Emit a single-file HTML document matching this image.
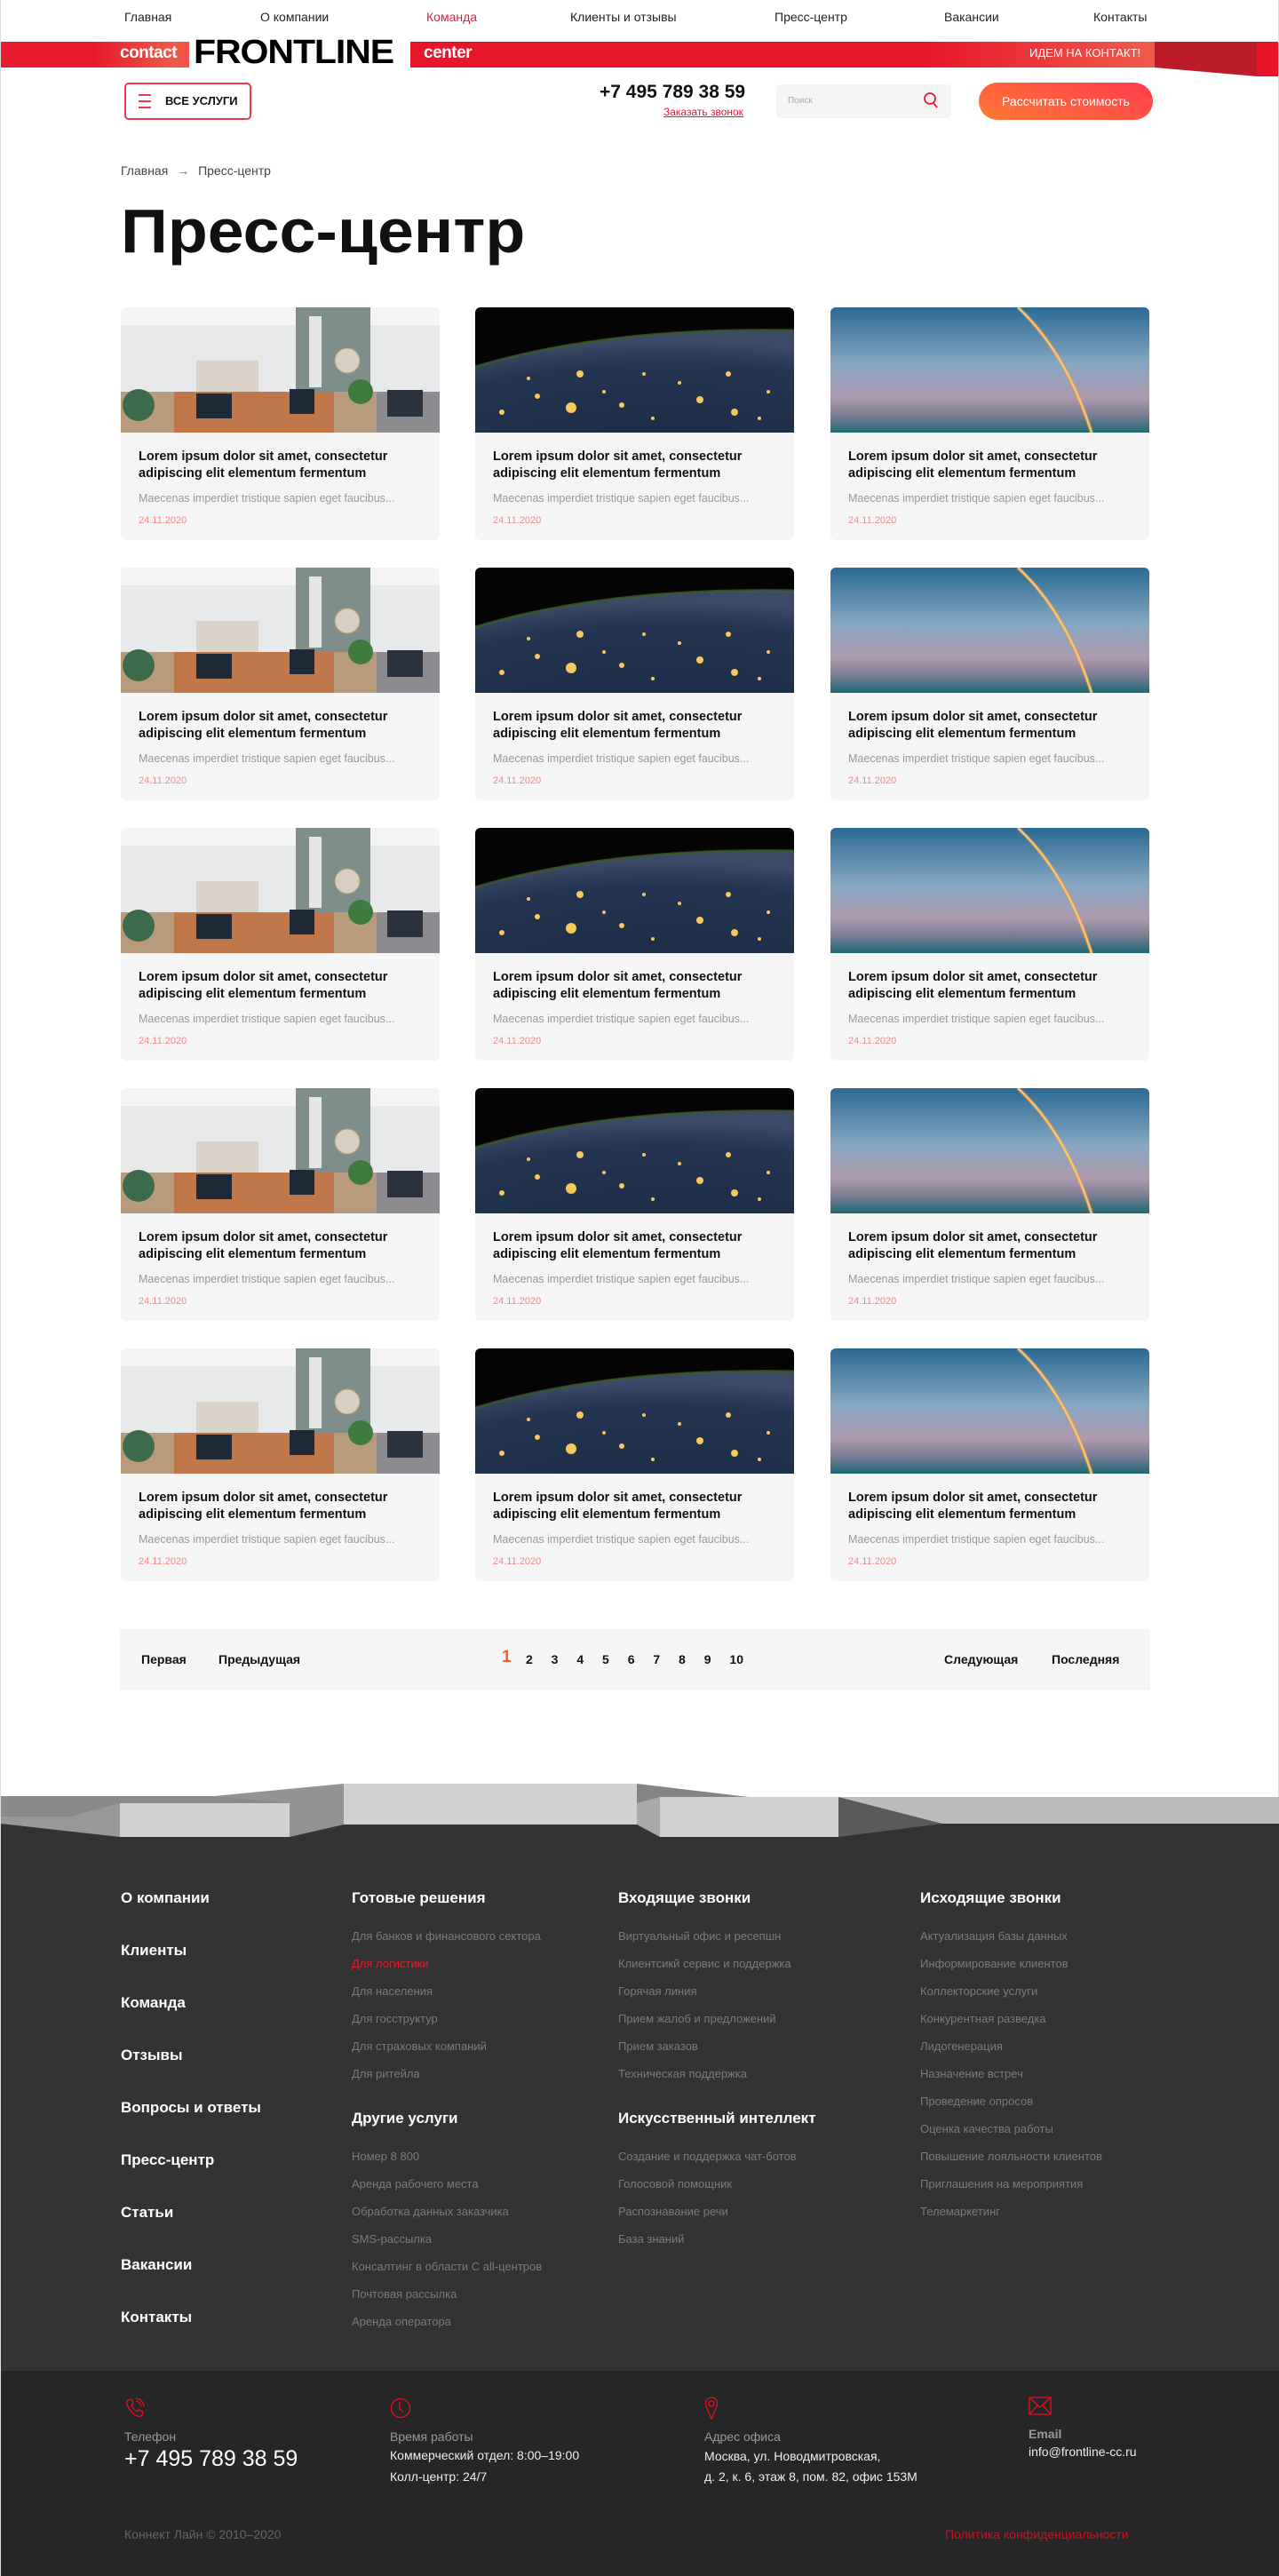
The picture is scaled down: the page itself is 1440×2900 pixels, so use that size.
<!DOCTYPE html>
<html><head><meta charset="utf-8">
<style>
*{margin:0;padding:0;box-sizing:border-box}
body{width:1440px;height:2900px;position:relative;background:#fff;font-family:"Liberation Sans","Noto Sans CJK SC",sans-serif;color:#111;overflow:hidden;border-left:1px solid #ddd;border-right:1px solid #ddd}
.a{position:absolute;white-space:nowrap}
.nav{top:11px;font-size:14px;color:#222}
.card{position:absolute;width:359px;height:262px;background:#f5f5f5;border-radius:6px;overflow:hidden}
.card svg{display:block}
.card h3{position:absolute;left:20px;top:159px;font-size:14.5px;line-height:19px;font-weight:bold;color:#111;width:330px}
.card p{position:absolute;left:20px;top:208px;font-size:12.5px;color:#999;white-space:nowrap}
.card span{position:absolute;left:20px;top:234px;font-size:11px;color:#f08a8f}
.pg{top:1860px;font-size:14px;font-weight:bold}
.fl{left:135px;font-size:17px;font-weight:bold;color:#fff}
.fh{font-size:17px;color:#fff;font-weight:bold}
.fi{font-size:13px;color:#7a7a7a}
</style></head><body>
<svg width="0" height="0" style="position:absolute"><defs>
<linearGradient id="sky" x1="0" y1="0" x2="0" y2="1"><stop offset="0" stop-color="#2a6a93"/><stop offset=".45" stop-color="#86a6c2"/><stop offset=".72" stop-color="#ae9aae"/><stop offset=".86" stop-color="#7b7d94"/><stop offset="1" stop-color="#1d6a74"/></linearGradient>
<radialGradient id="earth" cx=".6" cy="1.3" r="1.2"><stop offset="0" stop-color="#1b2a44"/><stop offset=".8" stop-color="#233550"/><stop offset="1" stop-color="#3b4a66"/></radialGradient>
<g id="imgA"><rect width="359" height="141" fill="#e8e9ea"/><rect x="0" y="0" width="359" height="20" fill="#f4f4f4"/><rect x="197" y="0" width="84" height="141" fill="#7e8f8b"/><rect x="212" y="10" width="14" height="80" fill="#e6e6e6"/><circle cx="255" cy="60" r="14" fill="#d8cfc0" stroke="#b8a070"/><rect x="85" y="60" width="70" height="40" fill="#d9d3c9"/><rect x="0" y="95" width="359" height="46" fill="#b89a7c"/><rect x="60" y="95" width="180" height="46" fill="#c0784a"/><rect x="85" y="97" width="40" height="28" fill="#1e2a38"/><rect x="190" y="92" width="28" height="28" fill="#1e2a38"/><rect x="288" y="95" width="71" height="46" fill="#8b8b90"/><rect x="300" y="93" width="40" height="30" fill="#2a3240"/><circle cx="20" cy="110" r="18" fill="#3d6a4a"/><circle cx="270" cy="95" r="14" fill="#3f7a3e"/></g>
<g id="imgB"><rect width="359" height="141" fill="#050505"/><path d="M0 67 Q150 22 359 26 L359 141 L0 141Z" fill="url(#earth)"/><path d="M0 67 Q150 22 359 26" stroke="#3e5a2e" stroke-width="3" fill="none" opacity=".8"/><g fill="#f7c760"><circle cx="118" cy="75" r="4"/><circle cx="108" cy="113" r="6"/><circle cx="165" cy="110" r="3"/><circle cx="253" cy="104" r="4"/><circle cx="292" cy="118" r="4"/><circle cx="70" cy="100" r="3"/><circle cx="30" cy="118" r="3"/><circle cx="190" cy="75" r="2"/><circle cx="285" cy="75" r="3"/><circle cx="330" cy="95" r="2"/><circle cx="230" cy="85" r="2"/><circle cx="145" cy="95" r="2"/><circle cx="320" cy="125" r="2"/><circle cx="200" cy="125" r="2"/><circle cx="60" cy="80" r="2"/></g></g>
<g id="imgC"><rect width="359" height="141" fill="url(#sky)"/><path d="M211 0 Q265 50 294 141" stroke="#ffd98a" stroke-width="2.5" fill="none"/><path d="M211 0 Q265 50 294 141" stroke="#f59c3c" stroke-width="5" fill="none" opacity=".35"/></g>
</defs></svg>

<!-- top nav -->
<div class="a nav" style="left:139px">Главная</div>
<div class="a nav" style="left:292px">О компании</div>
<div class="a nav" style="left:479px;color:#e8192c">Команда</div>
<div class="a nav" style="left:641px">Клиенты и отзывы</div>
<div class="a nav" style="left:871px">Пресс-центр</div>
<div class="a nav" style="left:1062px">Вакансии</div>
<div class="a nav" style="left:1230px">Контакты</div>

<!-- red band -->
<div class="a" style="left:0;top:47px;width:1299px;height:29px;background:linear-gradient(90deg,#e8192c 0%,#e8192c 8%,#ef5a4a 15%,#e8162a 25%,#e8162a 80%,#ee5c4c 100%)"></div>
<svg class="a" style="left:1299px;top:47px" width="141" height="40"><polygon points="0,0 115,0 115,39 0,29" fill="#bd1b29"/><rect x="115" y="0" width="24" height="39" fill="#e8152a"/></svg>
<div class="a" style="left:134px;top:49px;font-size:19px;font-weight:bold;color:#fff;letter-spacing:-.5px">contact</div>
<div class="a" style="left:212px;top:43px;width:249px;height:33px;background:#fff"></div>
<div class="a" style="left:217px;top:38px;font-size:38px;font-weight:bold;color:#000;letter-spacing:-1px;transform:scaleX(1.08);transform-origin:left">FRONTLINE</div>
<div class="a" style="left:476px;top:49px;font-size:19px;font-weight:bold;color:#fff;letter-spacing:-.5px">center</div>
<div class="a" style="left:1158px;top:52px;font-size:13px;color:#fff">ИДЕМ НА КОНТАКТ!</div>

<!-- row 2 -->
<div class="a" style="left:139px;top:93px;width:143px;height:42px;border:2px solid #f0394a;border-radius:5px"></div>
<div class="a" style="left:155px;top:106px;width:14px;height:2px;background:#f0394a;box-shadow:0 7px 0 #f0394a,0 14px 0 #f0394a"></div>
<div class="a" style="left:185px;top:106px;font-size:13px;font-weight:bold">ВСЕ УСЛУГИ</div>
<div class="a" style="left:674px;top:92px;font-size:21px;font-weight:bold">+7 495 789 38 59</div>
<div class="a" style="left:746px;top:119px;font-size:12px;color:#e8192c;text-decoration:underline">Заказать звонок</div>
<div class="a" style="left:873px;top:95px;width:197px;height:38px;background:#f4f4f4;border-radius:5px"></div>
<div class="a" style="left:886px;top:108px;font-size:10px;color:#aaa">Поиск</div>
<svg class="a" style="left:1039px;top:103px" width="16" height="20"><circle cx="7" cy="8" r="6" stroke="#e8192c" stroke-width="1.8" fill="none"/><line x1="11" y1="13" x2="15" y2="18" stroke="#e8192c" stroke-width="1.8"/></svg>
<div class="a" style="left:1101px;top:93px;width:196px;height:42px;border-radius:21px;background:linear-gradient(20deg,#ff7a35,#ff3a4c);color:#fff;font-size:14px;line-height:42px;text-align:center">Рассчитать стоимость</div>

<div class="a" style="left:135px;top:184px;font-size:14px;color:#444">Главная <span style="margin:0 6px;color:#666">→</span> Пресс-центр</div>
<div class="a" style="left:135px;top:220px;font-size:70px;font-weight:bold;letter-spacing:0px;transform:scaleX(1.05);transform-origin:left">Пресс-центр</div>

<!-- cards -->
<div class="card" style="left:135px;top:346px"><svg width="359" height="141"><use href="#imgA"/></svg><h3>Lorem ipsum dolor sit amet, consectetur adipiscing elit elementum fermentum</h3><p>Maecenas imperdiet tristique sapien eget faucibus...</p><span>24.11.2020</span></div>
<div class="card" style="left:534px;top:346px"><svg width="359" height="141"><use href="#imgB"/></svg><h3>Lorem ipsum dolor sit amet, consectetur adipiscing elit elementum fermentum</h3><p>Maecenas imperdiet tristique sapien eget faucibus...</p><span>24.11.2020</span></div>
<div class="card" style="left:934px;top:346px"><svg width="359" height="141"><use href="#imgC"/></svg><h3>Lorem ipsum dolor sit amet, consectetur adipiscing elit elementum fermentum</h3><p>Maecenas imperdiet tristique sapien eget faucibus...</p><span>24.11.2020</span></div>

<div class="card" style="left:135px;top:639px"><svg width="359" height="141"><use href="#imgA"/></svg><h3>Lorem ipsum dolor sit amet, consectetur adipiscing elit elementum fermentum</h3><p>Maecenas imperdiet tristique sapien eget faucibus...</p><span>24.11.2020</span></div>
<div class="card" style="left:534px;top:639px"><svg width="359" height="141"><use href="#imgB"/></svg><h3>Lorem ipsum dolor sit amet, consectetur adipiscing elit elementum fermentum</h3><p>Maecenas imperdiet tristique sapien eget faucibus...</p><span>24.11.2020</span></div>
<div class="card" style="left:934px;top:639px"><svg width="359" height="141"><use href="#imgC"/></svg><h3>Lorem ipsum dolor sit amet, consectetur adipiscing elit elementum fermentum</h3><p>Maecenas imperdiet tristique sapien eget faucibus...</p><span>24.11.2020</span></div>

<div class="card" style="left:135px;top:932px"><svg width="359" height="141"><use href="#imgA"/></svg><h3>Lorem ipsum dolor sit amet, consectetur adipiscing elit elementum fermentum</h3><p>Maecenas imperdiet tristique sapien eget faucibus...</p><span>24.11.2020</span></div>
<div class="card" style="left:534px;top:932px"><svg width="359" height="141"><use href="#imgB"/></svg><h3>Lorem ipsum dolor sit amet, consectetur adipiscing elit elementum fermentum</h3><p>Maecenas imperdiet tristique sapien eget faucibus...</p><span>24.11.2020</span></div>
<div class="card" style="left:934px;top:932px"><svg width="359" height="141"><use href="#imgC"/></svg><h3>Lorem ipsum dolor sit amet, consectetur adipiscing elit elementum fermentum</h3><p>Maecenas imperdiet tristique sapien eget faucibus...</p><span>24.11.2020</span></div>

<div class="card" style="left:135px;top:1225px"><svg width="359" height="141"><use href="#imgA"/></svg><h3>Lorem ipsum dolor sit amet, consectetur adipiscing elit elementum fermentum</h3><p>Maecenas imperdiet tristique sapien eget faucibus...</p><span>24.11.2020</span></div>
<div class="card" style="left:534px;top:1225px"><svg width="359" height="141"><use href="#imgB"/></svg><h3>Lorem ipsum dolor sit amet, consectetur adipiscing elit elementum fermentum</h3><p>Maecenas imperdiet tristique sapien eget faucibus...</p><span>24.11.2020</span></div>
<div class="card" style="left:934px;top:1225px"><svg width="359" height="141"><use href="#imgC"/></svg><h3>Lorem ipsum dolor sit amet, consectetur adipiscing elit elementum fermentum</h3><p>Maecenas imperdiet tristique sapien eget faucibus...</p><span>24.11.2020</span></div>

<div class="card" style="left:135px;top:1518px"><svg width="359" height="141"><use href="#imgA"/></svg><h3>Lorem ipsum dolor sit amet, consectetur adipiscing elit elementum fermentum</h3><p>Maecenas imperdiet tristique sapien eget faucibus...</p><span>24.11.2020</span></div>
<div class="card" style="left:534px;top:1518px"><svg width="359" height="141"><use href="#imgB"/></svg><h3>Lorem ipsum dolor sit amet, consectetur adipiscing elit elementum fermentum</h3><p>Maecenas imperdiet tristique sapien eget faucibus...</p><span>24.11.2020</span></div>
<div class="card" style="left:934px;top:1518px"><svg width="359" height="141"><use href="#imgC"/></svg><h3>Lorem ipsum dolor sit amet, consectetur adipiscing elit elementum fermentum</h3><p>Maecenas imperdiet tristique sapien eget faucibus...</p><span>24.11.2020</span></div>

<!-- pagination -->
<div class="a" style="left:134px;top:1834px;width:1160px;height:69px;background:#f5f5f5"></div>
<div class="a pg" style="left:158px">Первая</div>
<div class="a pg" style="left:245px">Предыдущая</div>
<div class="a pg" style="left:564px;top:1855px;font-size:19px;color:#ff5a2a">1</div>
<div class="a pg" style="left:591px;word-spacing:17px">2 3 4 5 6 7 8 9 10</div>
<div class="a pg" style="left:1062px">Следующая</div>
<div class="a pg" style="left:1183px">Последняя</div>

<!-- footer shape -->
<svg class="a" style="left:0;top:2000px" width="1440" height="80">
<rect x="0" y="53" width="1440" height="27" fill="#333"/>
<polygon points="0,22 360,22 360,53 0,53" fill="#8a8a8c"/>
<polygon points="0,45 78,45 134,30 134,68 0,53" fill="#98989b"/>
<polygon points="240,22 386,8 386,54 325,68 325,30" fill="#939396"/>
<polygon points="716,8 850,24 716,54 440,54" fill="#858588"/>
<polygon points="716,30 742,23 742,68 716,54" fill="#a9a9ac"/>
<polygon points="943,23 1440,23 1440,53 1060,53" fill="#bcbcbe"/>
<polygon points="943,23 1060,53 943,68" fill="#5a5a5c"/>
<rect x="134" y="30" width="191" height="38" fill="#d1d1d3"/>
<rect x="386" y="8" width="330" height="46" fill="#d1d1d3"/>
<rect x="742" y="23" width="201" height="45" fill="#d1d1d3"/>
</svg>
<div class="a" style="left:0;top:2080px;width:1440px;height:589px;background:#333"></div>

<!-- footer links -->
<div class="a fl" style="top:2127px">О компании</div>
<div class="a fl" style="top:2186px">Клиенты</div>
<div class="a fl" style="top:2245px">Команда</div>
<div class="a fl" style="top:2304px">Отзывы</div>
<div class="a fl" style="top:2363px">Вопросы и ответы</div>
<div class="a fl" style="top:2422px">Пресс-центр</div>
<div class="a fl" style="top:2481px">Статьи</div>
<div class="a fl" style="top:2540px">Вакансии</div>
<div class="a fl" style="top:2599px">Контакты</div>

<div class="a fh" style="left:395px;top:2127px">Готовые решения</div>
<div class="a fi" style="left:395px;top:2164px;line-height:31px">Для банков и финансового сектора<br><span style="color:#e8192c">Для логистики</span><br>Для населения<br>Для госструктур<br>Для страховых компаний<br>Для ритейла</div>
<div class="a fh" style="left:395px;top:2375px">Другие услуги</div>
<div class="a fi" style="left:395px;top:2412px;line-height:31px">Номер 8 800<br>Аренда рабочего места<br>Обработка данных заказчика<br>SMS-рассылка<br>Консалтинг в области C all-центров<br>Почтовая рассылка<br>Аренда оператора</div>

<div class="a fh" style="left:695px;top:2127px">Входящие звонки</div>
<div class="a fi" style="left:695px;top:2164px;line-height:31px">Виртуальный офис и ресепшн<br>Клиентсикй сервис и поддержка<br>Горячая линия<br>Прием жалоб и предложений<br>Прием заказов<br>Техническая поддержка</div>
<div class="a fh" style="left:695px;top:2375px">Искусственный интеллект</div>
<div class="a fi" style="left:695px;top:2412px;line-height:31px">Создание и поддержка чат-ботов<br>Голосовой помощник<br>Распознавание речи<br>База знаний</div>

<div class="a fh" style="left:1035px;top:2127px">Исходящие звонки</div>
<div class="a fi" style="left:1035px;top:2164px;line-height:31px">Актуализация базы данных<br>Информирование клиентов<br>Коллекторские услуги<br>Конкурентная разведка<br>Лидогенерация<br>Назначение встреч<br>Проведение опросов<br>Оценка качества работы<br>Повышение лояльности клиентов<br>Приглашения на мероприятия<br>Телемаркетинг</div>

<!-- bottom footer -->
<div class="a" style="left:0;top:2669px;width:1440px;height:231px;background:#262626"></div>
<svg class="a" style="left:139px;top:2699px" width="24" height="24" fill="none" stroke="#e8101e" stroke-width="1.3"><path d="M4 3 L8 2 L10 7 L8 9 Q10 13 14 16 L16 14 L21 16 L20 20 Q17 23 11 19 Q5 14 3 8 Q2 5 4 3Z"/><path d="M13 4 Q18 5 19 10"/><path d="M13 1 Q21 2 22 10"/></svg>
<svg class="a" style="left:438px;top:2699px" width="24" height="24" fill="none" stroke="#e8101e" stroke-width="1.3"><circle cx="12" cy="12" r="10.5"/><path d="M11 5 V13 L15 16"/></svg>
<svg class="a" style="left:792px;top:2698px" width="16" height="26" fill="none" stroke="#e8101e" stroke-width="1.3"><path d="M8 25 L2 11 Q0 2 8 1 Q16 2 14 11Z"/><circle cx="8" cy="8" r="3"/></svg>
<svg class="a" style="left:1157px;top:2698px" width="26" height="22" fill="none" stroke="#e8101e" stroke-width="1.3"><rect x="1" y="1" width="24" height="19"/><path d="M1 1 L13 12 L25 1 M1 20 L10 10 M25 20 L16 10"/></svg>

<div class="a" style="left:139px;top:2735px;font-size:14px;color:#9a9a9a">Телефон</div>
<div class="a" style="left:139px;top:2754px;font-size:25px;color:#fff">+7 495 789 38 59</div>
<div class="a" style="left:438px;top:2735px;font-size:14px;color:#9a9a9a">Время работы</div>
<div class="a" style="left:438px;top:2752px;font-size:14px;color:#eee;line-height:24px">Коммерческий отдел: 8:00–19:00<br>Колл-центр: 24/7</div>
<div class="a" style="left:792px;top:2735px;font-size:14px;color:#9a9a9a">Адрес офиса</div>
<div class="a" style="left:792px;top:2754px;font-size:14px;color:#eee;line-height:23px">Москва, ул. Новодмитровская,<br>д. 2, к. 6, этаж 8, пом. 82, офис 153М</div>
<div class="a" style="left:1157px;top:2732px;font-size:14px;color:#9a9a9a;font-weight:bold">Email</div>
<div class="a" style="left:1157px;top:2752px;font-size:14px;color:#eee">info@frontline-cc.ru</div>

<div class="a" style="left:139px;top:2845px;font-size:14px;color:#666">Коннект Лайн © 2010–2020</div>
<div class="a" style="left:1063px;top:2845px;font-size:14px;color:#d0101e">Политика конфиденциальности</div>
</body></html>
